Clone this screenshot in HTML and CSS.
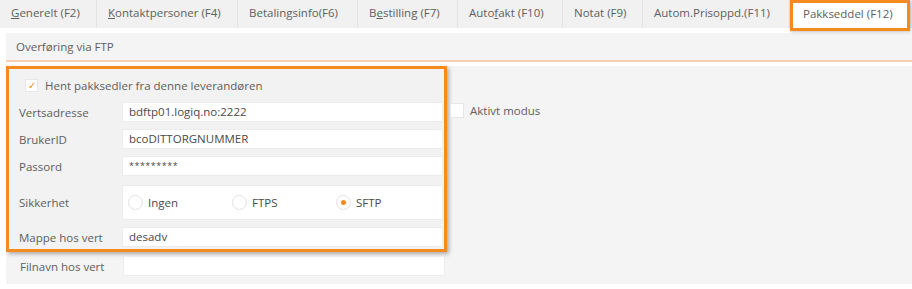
FILE: index.html
```html
<!DOCTYPE html>
<html>
<head>
	<title>Leverandør</title>
	<meta charset="utf-8">
	<link rel="stylesheet" href="styles.css">
</head>
<body>
  <div class="tabs">
  	<div class="tab t1"><u>G</u>enerelt (F2)</div>
  	<div class="tab t2"><u>K</u>ontaktpersoner (F4)</div>
  	<div class="tab t3">Betalingsinfo(F6)</div>
  	<div class="tab t4">B<u>e</u>stilling (F7)</div>
  	<div class="tab t5">Auto<u>f</u>akt (F10)</div>
  	<div class="tab t6">Notat (F9)</div>
  	<div class="tab t7">Autom.Prisoppd.(F11)</div>
  	<div class="tab t8 active">Pakkseddel (F12)</div>
  </div>
  <div class="page">
  	<div class="header">Overføring via FTP</div>
  	<div class="content">
  		<div class="form">
  			<div class="mark">
  				<div class="check-row">
  					<span class="box">&#10003;</span>
  					Hent pakksedler fra denne leverandøren
  				</div>
  				<div class="row">
  					<div class="label">Vertsadresse</div>
  					<div class="field">bdftp01.logiq.no:2222</div>
  				</div>
  				<div class="row">
  					<div class="label">BrukerID</div>
  					<div class="field">bcoDITTORGNUMMER</div>
  				</div>
  				<div class="row">
  					<div class="label">Passord</div>
  					<div class="field pw">*********</div>
  				</div>
  				<div class="row radio-row">
  					<div class="label">Sikkerhet</div>
  					<div class="field radios">
  						<span class="opt"><span class="radio"></span>Ingen</span>
  						<span class="opt"><span class="radio"></span>FTPS</span>
  						<span class="opt"><span class="radio on"></span>SFTP</span>
  					</div>
  				</div>
  				<div class="row">
  					<div class="label">Mappe hos vert</div>
  					<div class="field">desadv</div>
  				</div>
  			</div>
  			<div class="row last">
  				<div class="label">Filnavn hos vert</div>
  				<div class="field"></div>
  			</div>
  		</div>
  		<div class="side">
  			<span class="box"></span>
  			Aktivt modus
  		</div>
  	</div>
  </div>
</body>
</html>
```
FILE: styles.css
```css
body {
	margin: 0;
	background: #fff;
	font-family: "Open Sans", "Noto Sans", sans-serif;
	font-size: 11.5px;
	color: #606060;
	width: 912px;
	height: 289px;
	overflow: hidden;
}
.tabs {
	display: flex;
	height: 28px;
	background: #f1f1f1;
	border-bottom: 5px solid #fff;
}
.tab {
	box-sizing: border-box;
	height: 28px;
	line-height: 26px;
	padding-left: 11px;
	border-right: 1px solid #e2e2e2;
	white-space: nowrap;
}
.tab u {
	text-decoration-thickness: 1px;
}
.t1 { width: 97px; }
.t2 { width: 141px; }
.t3 { width: 120px; }
.t4 { width: 100px; }
.t5 { width: 105px; }
.t6 { width: 80px; }
.t7 { width: 147px; }
.t8 { width: 120px; }
.tab.active {
	background: #fff;
	border: 3px solid #f58a1f;
	line-height: 22px;
	padding-left: 10px;
	box-shadow: 1px 1px 3px rgba(0, 0, 0, 0.25);
	height: 31px;
	position: relative;
	z-index: 1;
}
.page {
	margin-left: 6px;
	background: #f4f4f4;
	height: 251px;
	overflow: hidden;
}
.header {
	height: 27px;
	line-height: 27px;
	padding-left: 10px;
	border-bottom: 2px solid #f8cdb0;
}
.content {
	display: flex;
	border-top: 4px solid #fff;
	margin-left: -6px;
	padding-left: 6px;
	background: linear-gradient(to right, #fff 6px, #f4f4f4 6px);
}
.form {
	width: 441px;
}
.mark {
	border: 3px solid #f58a1f;
	box-shadow: 2px 2px 4px rgba(0, 0, 0, 0.3);
	padding: 8px 1px 1px 10px;
	background: #f2f2f2;
}
.check-row {
	display: flex;
	align-items: center;
	height: 16px;
	padding-left: 6px;
	margin-bottom: 9px;
}
.box {
	display: inline-block;
	box-sizing: border-box;
	width: 13px;
	height: 13px;
	background: #fff;
	border: 1px solid #e6e6e6;
	margin-right: 7px;
	color: #f58a1f;
	font-size: 10px;
	line-height: 11px;
	text-align: center;
}
.row {
	display: flex;
	align-items: center;
	margin-bottom: 7px;
}
.mark .row:last-child {
	margin-bottom: 1px;
}
.label {
	width: 103px;
	flex: none;
}
.field {
	box-sizing: border-box;
	width: 322px;
	height: 20px;
	line-height: 18px;
	background: #fff;
	border: 1px solid #ececec;
	padding-left: 6px;
	color: #4a4a4a;
}
.pw {
	font-size: 9px;
	letter-spacing: 0.5px;
}
.radio-row {
	margin-top: 9px;
}
.radios {
	height: 35px;
	display: flex;
	align-items: center;
	padding-left: 5px;
}
.opt {
	display: flex;
	align-items: center;
	width: 104px;
}
.radio {
	box-sizing: border-box;
	width: 15px;
	height: 15px;
	border-radius: 50%;
	border: 1px solid #e2e2e2;
	background: #fff;
	margin-right: 5px;
	position: relative;
}
.radio.on::after {
	content: "";
	position: absolute;
	left: 4px;
	top: 4px;
	width: 5px;
	height: 5px;
	border-radius: 50%;
	background: #f58a1f;
}
.form > .row.last {
	margin-top: 4px;
	padding-left: 14px;
}
.side {
	display: flex;
	align-items: center;
	margin-top: 36px;
	margin-left: 3px;
	height: 16px;
}
.side .box {
	width: 14px;
	height: 15px;
	margin-right: 6px;
}
```
